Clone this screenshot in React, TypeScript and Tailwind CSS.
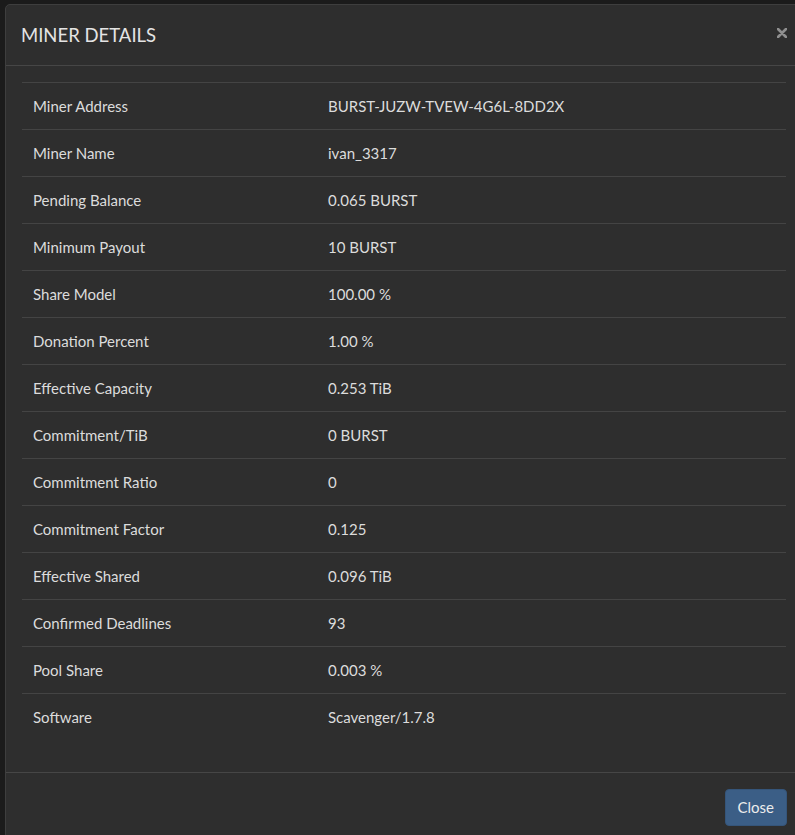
import React from 'react';

const rows: [string, string][] = [
  ['Miner Address', 'BURST-JUZW-TVEW-4G6L-8DD2X'],
  ['Miner Name', 'ivan_3317'],
  ['Pending Balance', '0.065 BURST'],
  ['Minimum Payout', '10 BURST'],
  ['Share Model', '100.00 %'],
  ['Donation Percent', '1.00 %'],
  ['Effective Capacity', '0.253 TiB'],
  ['Commitment/TiB', '0 BURST'],
  ['Commitment Ratio', '0'],
  ['Commitment Factor', '0.125'],
  ['Effective Shared', '0.096 TiB'],
  ['Confirmed Deadlines', '93'],
  ['Pool Share', '0.003 %'],
  ['Software', 'Scavenger/1.7.8'],
];

export default function App() {
  return (
    <div
      className="w-[795px] h-[835px] overflow-hidden bg-[#1b1b1b] pt-[4px] pl-[5px]"
      style={{ fontFamily: 'Lato, "Noto Sans", sans-serif' }}
    >
      <div className="w-[798px] bg-[#2e2e2e] border border-[#3e3e3e] rounded-[5px] text-[#dcdcdc]">
        {/* header */}
        <div className="h-[61px] flex items-center justify-between pl-[15px] pr-[15px] border-b border-[#464646]">
          <h4 className="text-[18.5px] text-[#e4e4e4] mt-[1px]">MINER DETAILS</h4>
          <button className="text-[#8f8f8f] mt-[-4px]">
            <svg width="10" height="10" viewBox="0 0 10 10">
              <path d="M1 1 L9 9 M9 1 L1 9" stroke="currentColor" strokeWidth="2.6" strokeLinecap="round" />
            </svg>
          </button>
        </div>

        {/* body */}
        <div className="pt-[16px] pb-[32px] px-[16px]">
          <div>
            {rows.map(([label, value]) => (
              <div key={label} className="h-[47px] flex items-center text-[15px] border-t border-[#444444]">
                <div className="w-[306px] pl-[11px]">{label}</div>
                <div>{value}</div>
              </div>
            ))}
          </div>
        </div>

        {/* footer */}
        <div className="border-t border-[#464646] pt-[16px] pb-[20px] pr-[15px] flex justify-end">
          <button className="h-[37px] px-[12px] bg-[#3b5e86] border border-[#35557a] rounded-[4px] text-[15px] text-[#ececec]">
            Close
          </button>
        </div>
      </div>
    </div>
  );
}
